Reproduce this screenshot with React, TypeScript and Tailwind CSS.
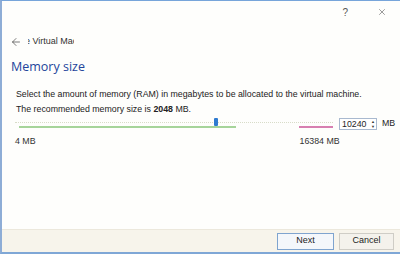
import { ArrowLeft, X } from 'lucide-react'

const body = { fontFamily: '"Liberation Sans", Arial, sans-serif' }

function App() {
  return (
    <main
      className="flex h-[254px] w-[400px] flex-col overflow-hidden border-t border-b-2 border-l-2 border-t-[#77a5da] border-b-[#7fa7d6] border-l-[#8eadd6] bg-[#fefefc] text-[#1e1e1e]"
      style={body}
    >
      {/* title bar */}
      <div className="flex h-[22px] items-center justify-end pr-[13px] text-[#555]">
        <span className="mr-[29px] text-[10px]">?</span>
        <X size={10} strokeWidth={1.4} />
      </div>

      {/* back + breadcrumb */}
      <div className="mt-[13px] flex h-[12px] items-center pl-[8px]">
        <ArrowLeft size={12} strokeWidth={1.4} className="text-[#444]" />
        <div className="ml-[6px] w-[46px] overflow-hidden whitespace-nowrap text-[9px] text-[#333]">
          <span className="-ml-[25px] inline-block">Create Virtual Machine</span>
        </div>
      </div>

      <h1
        className="mt-[11px] pl-[9px] text-[12.5px] leading-[16px] text-[#23459b]"
        style={{ fontFamily: '"Open Sans", "Noto Sans", sans-serif' }}
      >
        Memory size
      </h1>

      <div className="mt-[12px] pl-[14px] text-[8.8px] leading-[15px] text-[#222]">
        <p>Select the amount of memory (RAM) in megabytes to be allocated to the virtual machine.</p>
        <p>
          The recommended memory size is <b>2048</b> MB.
        </p>
      </div>

      {/* slider row */}
      <div className="-mt-[1px] flex items-center pl-[13px]">
        <div className="relative h-[16px] w-[318px]">
          <div className="absolute left-0 right-0 top-[6px] border-t border-dotted border-[#d8dcc8]" />
          <div className="absolute left-[4px] top-[10px] h-[2px] w-[217px] bg-[#a6d49a]" />
          <div className="absolute left-[284px] top-[10px] h-[2px] w-[34px] bg-[#d77fb0]" />
          <div className="absolute left-[199px] top-[2px] h-[8px] w-[4px] rounded-[1px] bg-[#2f7bd0]" />
        </div>
        <div className="ml-[6px] flex h-[12px] w-[38px] items-center border border-[#a9b9cf] bg-white pl-[2px]">
          <span className="flex-1 text-[8.8px] leading-none">10240</span>
          <span className="mr-[1px] flex flex-col items-center text-[4px] leading-[5px] text-[#333]">
            <span>▲</span>
            <span>▼</span>
          </span>
        </div>
        <span className="ml-[5px] text-[8.8px]">MB</span>
      </div>

      <div className="mt-[3px] flex text-[8.8px] text-[#333]">
        <span className="pl-[13px]">4 MB</span>
        <span className="ml-[264px]">16384 MB</span>
      </div>

      <div className="flex-1" />

      {/* footer */}
      <div className="flex h-[23px] items-center justify-end gap-[5px] border-t border-[#ece8dc] bg-[#f7f4eb] pr-[6px]">
        <button className="h-[17px] w-[57px] border border-[#7fa4cf] bg-[#f4f7fb] text-[9px] text-[#222]">
          Next
        </button>
        <button className="h-[17px] w-[55px] border border-[#cfcdc6] bg-[#f4f2ec] text-[9px] text-[#222]">
          Cancel
        </button>
      </div>
    </main>
  )
}

export default App
